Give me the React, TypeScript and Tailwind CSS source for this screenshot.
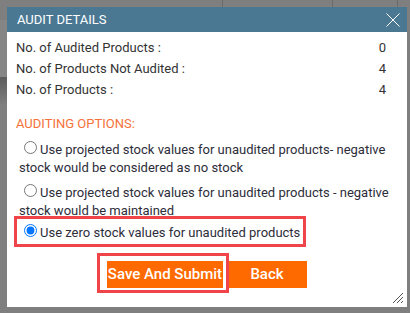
import React from "react";

const counts = [
  { label: "No. of Audited Products :", value: 0 },
  { label: "No. of Products Not Audited :", value: 4 },
  { label: "No. of Products :", value: 4 },
];

const options = [
  "Use projected stock values for unaudited products- negative stock would be considered as no stock",
  "Use projected stock values for unaudited products - negative stock would be maintained",
];

export default function App() {
  return (
    <div
      className="relative w-[410px] h-[313px] overflow-hidden bg-[#7f7f7f] pt-[7px] pl-[7px]"
      style={{ fontFamily: "Roboto, 'Liberation Sans', sans-serif" }}
    >
      {/* page behind the overlay */}
      <div className="absolute top-0 left-[222px] w-px h-[7px] bg-[#6a6a6a]" />
      <div className="absolute top-0 left-[332px] w-px h-[7px] bg-[#6a6a6a]" />
      <div className="absolute top-0 left-[397px] w-px h-[7px] bg-[#6a6a6a]" />
      <div className="absolute top-[20px] left-0 w-[7px] h-[57px] bg-[#858585]" />
      <div className="absolute top-[77px] left-0 w-[7px] h-[28px] bg-gradient-to-b from-[#5c5c5c] to-[#7f7f7f]" />

      {/* dialog */}
      <div className="relative w-[400px] h-[300px] bg-white flex flex-col">
        <div className="h-[25px] bg-[#4a7893] flex items-center justify-between pl-[10px] pr-[7px]">
          <span className="text-[13px] text-white uppercase">Audit Details</span>
          <svg width="14" height="14" viewBox="0 0 14 14" className="text-white">
            <path d="M0.5 0.5 L13.5 13.5 M13.5 0.5 L0.5 13.5" stroke="currentColor" strokeWidth="1" fill="none" />
          </svg>
        </div>

        <div className="flex flex-col pt-[5px] pl-[9px] pr-[21px] text-[13px] text-[#333]">
          {counts.map((c) => (
            <div key={c.label} className="flex justify-between leading-[21px]">
              <span>{c.label}</span>
              <span>{c.value}</span>
            </div>
          ))}

          <div className="mt-[13px] leading-[21px] uppercase text-[#f5713a]">Auditing Options:</div>
        </div>

        <div className="flex flex-col pl-[12px] pr-[14px] mt-[4px] text-[13px] leading-[18px] text-[#2d2d3a]">
          {options.map((o) => (
            <label key={o} className="block mb-[4px]">
              <input type="radio" name="audit" className="ml-[5px] mr-[3px] mt-[3px]" />
              {o}
            </label>
          ))}
          <div className="flex -mt-[3px]">
            <label className="relative block">
              <input type="radio" name="audit" defaultChecked className="ml-[5px] mr-[3px] mt-[3px]" />
              Use zero stock values for unaudited products
              <span className="absolute -left-[5px] -right-[6px] -top-[5px] -bottom-[5px] border-[3px] border-[#f0444b]" />
            </label>
          </div>
        </div>

        <div className="flex justify-center gap-[4px] mt-[19px]">
          <div className="relative">
            <button className="w-[116px] h-[27px] bg-[#ff6a00] text-white text-[15px] font-medium">
              Save And Submit
            </button>
            <span className="absolute -left-[10px] -right-[6px] -top-[8px] -bottom-[5px] border-[3px] border-[#f0444b]" />
          </div>
          <button className="w-[80px] h-[27px] bg-[#ff6a00] text-white text-[15px] font-medium">Back</button>
        </div>

        <svg width="12" height="12" viewBox="0 0 12 12" className="absolute right-[3px] bottom-[3px]">
          <path d="M11 1 L1 11 M11 5 L5 11 M11 9 L9 11" stroke="#555" strokeWidth="1" fill="none" />
        </svg>
      </div>
    </div>
  );
}
